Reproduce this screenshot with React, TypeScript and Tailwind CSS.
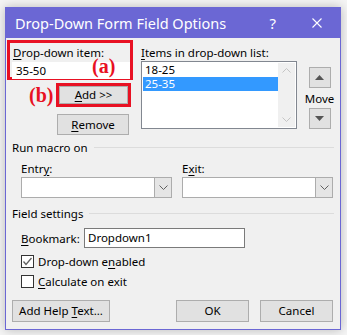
import React, { FC } from 'react'

const font = { fontFamily: '"Noto Sans", "Open Sans", sans-serif' }
const serif = { fontFamily: '"Liberation Serif", serif' }

const Acc: FC<{ children: React.ReactNode }> = ({ children }) => (
  <span className="underline underline-offset-2">{children}</span>
)

const Btn: FC<{ className?: string; children: React.ReactNode }> = ({ className = '', children }) => (
  <div className={`flex items-center justify-center bg-[#e1e1e1] border border-[#adadad] text-[11.5px] text-black ${className}`}>
    {children}
  </div>
)

const Combo: FC = () => (
  <div className="flex h-[21px] w-[151px] border border-[#acacac] bg-white">
    <div className="flex-1" />
    <div className="flex w-[17px] items-center justify-center border-l border-[#acacac] bg-[#e5e5e5]">
      <svg width="9" height="5" viewBox="0 0 9 5">
        <path d="M0.5 0.5 L4.5 4.5 L8.5 0.5" fill="none" stroke="#606060" strokeWidth="1" />
      </svg>
    </div>
  </div>
)

const Check: FC<{ checked?: boolean }> = ({ checked }) => (
  <div className="flex h-[13px] w-[13px] items-center justify-center border border-[#333] bg-white">
    {checked && (
      <svg width="11" height="11" viewBox="0 0 11 11">
        <path d="M1.5 5.5 L4 8.5 L9.5 2" fill="none" stroke="#606060" strokeWidth="1.3" />
      </svg>
    )}
  </div>
)

const GroupTitle: FC<{ title: string; className?: string }> = ({ title, className = '' }) => (
  <div className={`flex items-center pl-[6px] pr-[6px] ${className}`}>
    <span className="text-[11.5px] leading-[15px]">{title}</span>
    <div className="ml-[6px] h-px flex-1 bg-[#dcdcdc]" />
  </div>
)

const App: FC = () => {
  return (
    <div className="h-[335px] w-[347px] bg-[#f5f5f5] pl-[5px] pt-[7px]" style={font}>
      <div className="flex h-[323px] w-[336px] flex-col border border-[#6b67d4] bg-[#f0f0f0] shadow-[0_0_10px_rgba(0,0,0,0.25)]">
        {/* title bar */}
        <div className="flex h-[30px] items-center bg-[#6b67d4] pl-[9px] text-white">
          <span className="text-[14.5px] leading-none">Drop-Down Form Field Options</span>
          <span className="ml-auto text-[15px] leading-none">?</span>
          <svg className="ml-[36px] mr-[18px]" width="10" height="10" viewBox="0 0 10 10">
            <path d="M0.5 0.5 L9.5 9.5 M9.5 0.5 L0.5 9.5" stroke="white" strokeWidth="1.1" />
          </svg>
        </div>

        <div className="flex flex-1 flex-col text-black">
          {/* top row */}
          <div className="mt-[2px] flex items-start">
            <div className="ml-[1px] w-[126px]">
              <div className="relative h-[40px] border-[3px] border-[#e81123] pl-[3px]">
                <div className="mt-[2px] text-[11.5px] leading-[15px]">
                  <Acc>D</Acc>rop-down item:
                </div>
                <div className="ml-[-1px] mt-[2px] flex h-[17px] items-center bg-white pl-[4px] text-[11.5px]">
                  35-50
                </div>
                <span
                  className="absolute left-[82px] top-[13px] text-[20px] font-bold leading-none text-[#e81123]"
                  style={serif}
                >
                  (a)
                </span>
              </div>
              <div className="mt-[3px] flex items-center">
                <span className="ml-[22px] w-[27px] text-[20px] font-bold leading-none text-[#e81123]" style={serif}>
                  (b)
                </span>
                <div className="h-[24px] w-[75px] border-[3px] border-[#e81123]">
                  <Btn className="h-full w-full">
                    <span>
                      <Acc>A</Acc>dd &gt;&gt;
                    </span>
                  </Btn>
                </div>
              </div>
              <Btn className="ml-[50px] mt-[7px] h-[21px] w-[72px]">
                <span>
                  <Acc>R</Acc>emove
                </span>
              </Btn>
            </div>

            <div className="ml-[8px] w-[156px]">
              <div className="mt-[5px] text-[11.5px] leading-[15px]">
                <Acc>I</Acc>tems in drop-down list:
              </div>
              <div className="mt-[1px] flex h-[68px] border border-[#828790] bg-white p-px">
                <div className="flex-1 text-[11.5px] leading-[14px]">
                  <div className="pl-[2px]">18-25</div>
                  <div className="bg-[#3399ff] pl-[2px] text-white">25-35</div>
                </div>
                <div className="flex w-[17px] flex-col items-center justify-between bg-[#f0f0f0] py-[5px]">
                  <svg width="9" height="5" viewBox="0 0 9 5">
                    <path d="M0.5 4.5 L4.5 0.5 L8.5 4.5" fill="none" stroke="#c5c5c5" />
                  </svg>
                  <svg width="9" height="5" viewBox="0 0 9 5">
                    <path d="M0.5 0.5 L4.5 4.5 L8.5 0.5" fill="none" stroke="#c5c5c5" />
                  </svg>
                </div>
              </div>
            </div>

            <div className="ml-[9px] flex w-[27px] flex-col items-center">
              <Btn className="mt-[27px] h-[21px] w-[22px]">
                <svg width="9" height="5" viewBox="0 0 9 5">
                  <path d="M0 5 L4.5 0 L9 5 Z" fill="#555" />
                </svg>
              </Btn>
              <div className="mt-[3px] text-[11.5px] leading-[15px]">Move</div>
              <Btn className="mt-[2px] h-[21px] w-[22px]">
                <svg width="9" height="5" viewBox="0 0 9 5">
                  <path d="M0 0 L9 0 L4.5 5 Z" fill="#555" />
                </svg>
              </Btn>
            </div>
          </div>

          {/* run macro on */}
          <GroupTitle title="Run macro on" className="mt-[5px]" />
          <div className="mt-[6px] flex gap-[10px] pl-[15px]">
            <div>
              <div className="text-[11.5px] leading-[15px]">
                Entr<Acc>y</Acc>:
              </div>
              <div className="mt-[1px]">
                <Combo />
              </div>
            </div>
            <div>
              <div className="text-[11.5px] leading-[15px]">
                E<Acc>x</Acc>it:
              </div>
              <div className="mt-[1px]">
                <Combo />
              </div>
            </div>
          </div>

          {/* field settings */}
          <GroupTitle title="Field settings" className="mt-[8px]" />
          <div className="mt-[7px] flex items-center pl-[15px]">
            <span className="w-[63px] text-[11.5px] leading-[15px]">
              <Acc>B</Acc>ookmark:
            </span>
            <div className="flex h-[20px] w-[161px] items-center border border-[#7a7a7a] bg-white pl-[3px] text-[11.5px]">
              Dropdown1
            </div>
          </div>
          <div className="mt-[6px] flex items-center pl-[15px]">
            <Check checked />
            <span className="ml-[4px] text-[11.5px] leading-[15px]">
              Drop-down e<Acc>n</Acc>abled
            </span>
          </div>
          <div className="mt-[5px] flex items-center pl-[15px]">
            <Check />
            <span className="ml-[4px] text-[11.5px] leading-[15px]">
              <Acc>C</Acc>alculate on exit
            </span>
          </div>

          {/* buttons */}
          <div className="mt-auto mb-[7px] flex pl-[6px]">
            <Btn className="h-[22px] w-[98px]">
              <span>
                Add Help <Acc>T</Acc>ext...
              </span>
            </Btn>
            <Btn className="ml-auto h-[22px] w-[73px]">OK</Btn>
            <Btn className="ml-[11px] mr-[7px] h-[22px] w-[73px]">Cancel</Btn>
          </div>
        </div>
      </div>
    </div>
  )
}

export default App
